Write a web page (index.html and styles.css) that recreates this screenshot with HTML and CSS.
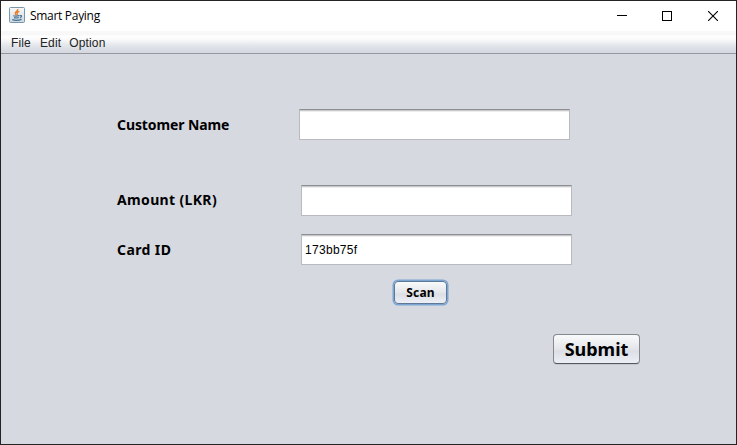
FILE: index.html
```html
<!DOCTYPE html>
<html lang="en">
<head>
<meta charset="utf-8">
<title>Smart Paying</title>
<link rel="stylesheet" href="styles.css">
</head>
<body>
<div class="window">
  <header class="titlebar">
    <svg class="app-icon" width="16" height="16" viewBox="0 0 16 16">
      <defs><linearGradient id="tile" x1="0" y1="0" x2="0" y2="1"><stop offset="0" stop-color="#f7f9fa"/><stop offset="1" stop-color="#cbd7df"/></linearGradient></defs>
      <rect x=".5" y=".5" width="15" height="15" rx="1" fill="url(#tile)" stroke="#7896ac"/>
      <path d="M8.8 2C9.5 4 5.5 4.8 6.4 6.8L7.4 8.2M10.4 4.3C8.1 5.1 7.7 5.8 8.6 7.6" fill="none" stroke="#e87820" stroke-width="1.4"/>
      <path d="M4.2 8.7Q7 9.6 10.2 8.7M5 10.7Q7.5 11.3 9.7 10.6M10.5 8.8C13.4 7.9 12.8 10.3 10.8 11M3.3 12.6Q7.5 14.1 12.5 12.4" fill="none" stroke="#426f92" stroke-width="1.2"/>
    </svg>
    <span class="title">Smart Paying</span>
    <div class="controls">
      <span class="control"><svg width="10" height="10"><path d="M0 4.5H10" stroke="#000"/></svg></span>
      <span class="control"><svg width="10" height="10"><rect x=".5" y=".5" width="9" height="9" fill="none" stroke="#000"/></svg></span>
      <span class="control"><svg width="10" height="10"><path d="M0 0L10 10M10 0L0 10" stroke="#000" stroke-width="1.1"/></svg></span>
    </div>
  </header>
  <nav class="menubar"><span>File</span><span>Edit</span><span>Option</span></nav>
  <main class="form">
    <div class="row row-name"><label class="label" for="name">Customer Name</label><input class="field" id="name"></div>
    <div class="row row-amount"><label class="label label-amount" for="amount">Amount (LKR)</label><input class="field" id="amount"></div>
    <div class="row row-card"><label class="label label-card" for="card">Card ID</label><input class="field" id="card" value="173bb75f"></div>
    <button class="button scan"><span>Scan</span></button>
    <button class="button submit"><span>Submit</span></button>
  </main>
</div>
</body>
</html>
```
FILE: styles.css
```css
* { box-sizing: border-box; }
body { margin: 0; }
.window {
  width: 737px;
  height: 445px;
  display: flex;
  flex-direction: column;
  overflow: hidden;
  border: 1px solid #242326;
  background: #d6d9e0;
  color: #000;
}
.titlebar {
  display: flex;
  align-items: center;
  height: 30px;
  flex: none;
  padding-left: 8px;
  background: #fff;
}
.app-icon { flex: none; margin-bottom: 2px; }
.title {
  margin-left: 5px;
  font: 12px/16px "Open Sans", sans-serif;
  letter-spacing: -0.3px;
}
.controls { display: flex; margin-left: auto; }
.control {
  display: flex;
  justify-content: center;
  align-items: center;
  width: 46px;
  height: 28px;
}
.control:first-child { padding-left: 2px; }
.menubar {
  display: flex;
  flex: none;
  gap: 9px;
  height: 23px;
  padding: 5px 10px 0;
  border-bottom: 1px solid #9297a1;
  background: linear-gradient(#f8f8f9 0, #f8f8f9 4px, #fff 5px, #fbfbfc 8px, #e4e7ec 14px, #d6d9e0 20px);
  font: 12px/15px "Liberation Sans", sans-serif;
  letter-spacing: 0.15px;
  color: #232323;
}
.menubar span:last-child { margin-left: -1px; }
.form {
  display: flex;
  flex-direction: column;
  align-items: flex-start;
  padding: 55px 0 0 116px;
}
.row { display: flex; align-items: center; height: 31px; }
.row-amount { margin-top: 45px; }
.row-card { margin-top: 18px; }
.label {
  width: 184px;
  font: bold 14px/20px "Noto Sans", sans-serif;
  white-space: nowrap;
}
.row-name .label { width: 182px; letter-spacing: -0.1px; }
.label-amount { letter-spacing: 0.35px; margin-bottom: 2px; }
.label-card { letter-spacing: 0.4px; }
.field {
  width: 271px;
  height: 31px;
  margin: 0;
  padding: 1px 3px 0;
  border: 1px solid #b9babf;
  border-top-color: #8d8e93;
  border-radius: 0;
  outline: 0;
  background: linear-gradient(#c8c8cb 0, #c8c8cb 1px, #eeeeef 1px, #eeeeef 2px, #fff 2px);
  font: 12px "Liberation Sans", sans-serif;
  letter-spacing: 0.3px;
  color: #000;
}
.button {
  display: flex;
  align-items: center;
  justify-content: center;
  padding: 0;
  border: 1px solid #85888f;
  border-bottom-color: #55585e;
  border-radius: 4px;
  background: linear-gradient(#f9fafb, #e5e7eb 48%, #dcdfe5 58%, #eceff5);
  font-family: "Noto Sans", sans-serif;
  font-weight: bold;
  color: #000;
}
.scan {
  width: 53px;
  height: 23px;
  margin: 16px 0 0 277px;
  border-color: #5f7896;
  box-shadow: 0 0 0 1.5px #7ba5d3;
  font-size: 12px;
  letter-spacing: 0.2px;
}
.submit {
  width: 87px;
  height: 30px;
  margin: 30px 0 0 436px;
  box-shadow: 0 1px 0 #c5c8cf;
  font-size: 18px;
}
```
